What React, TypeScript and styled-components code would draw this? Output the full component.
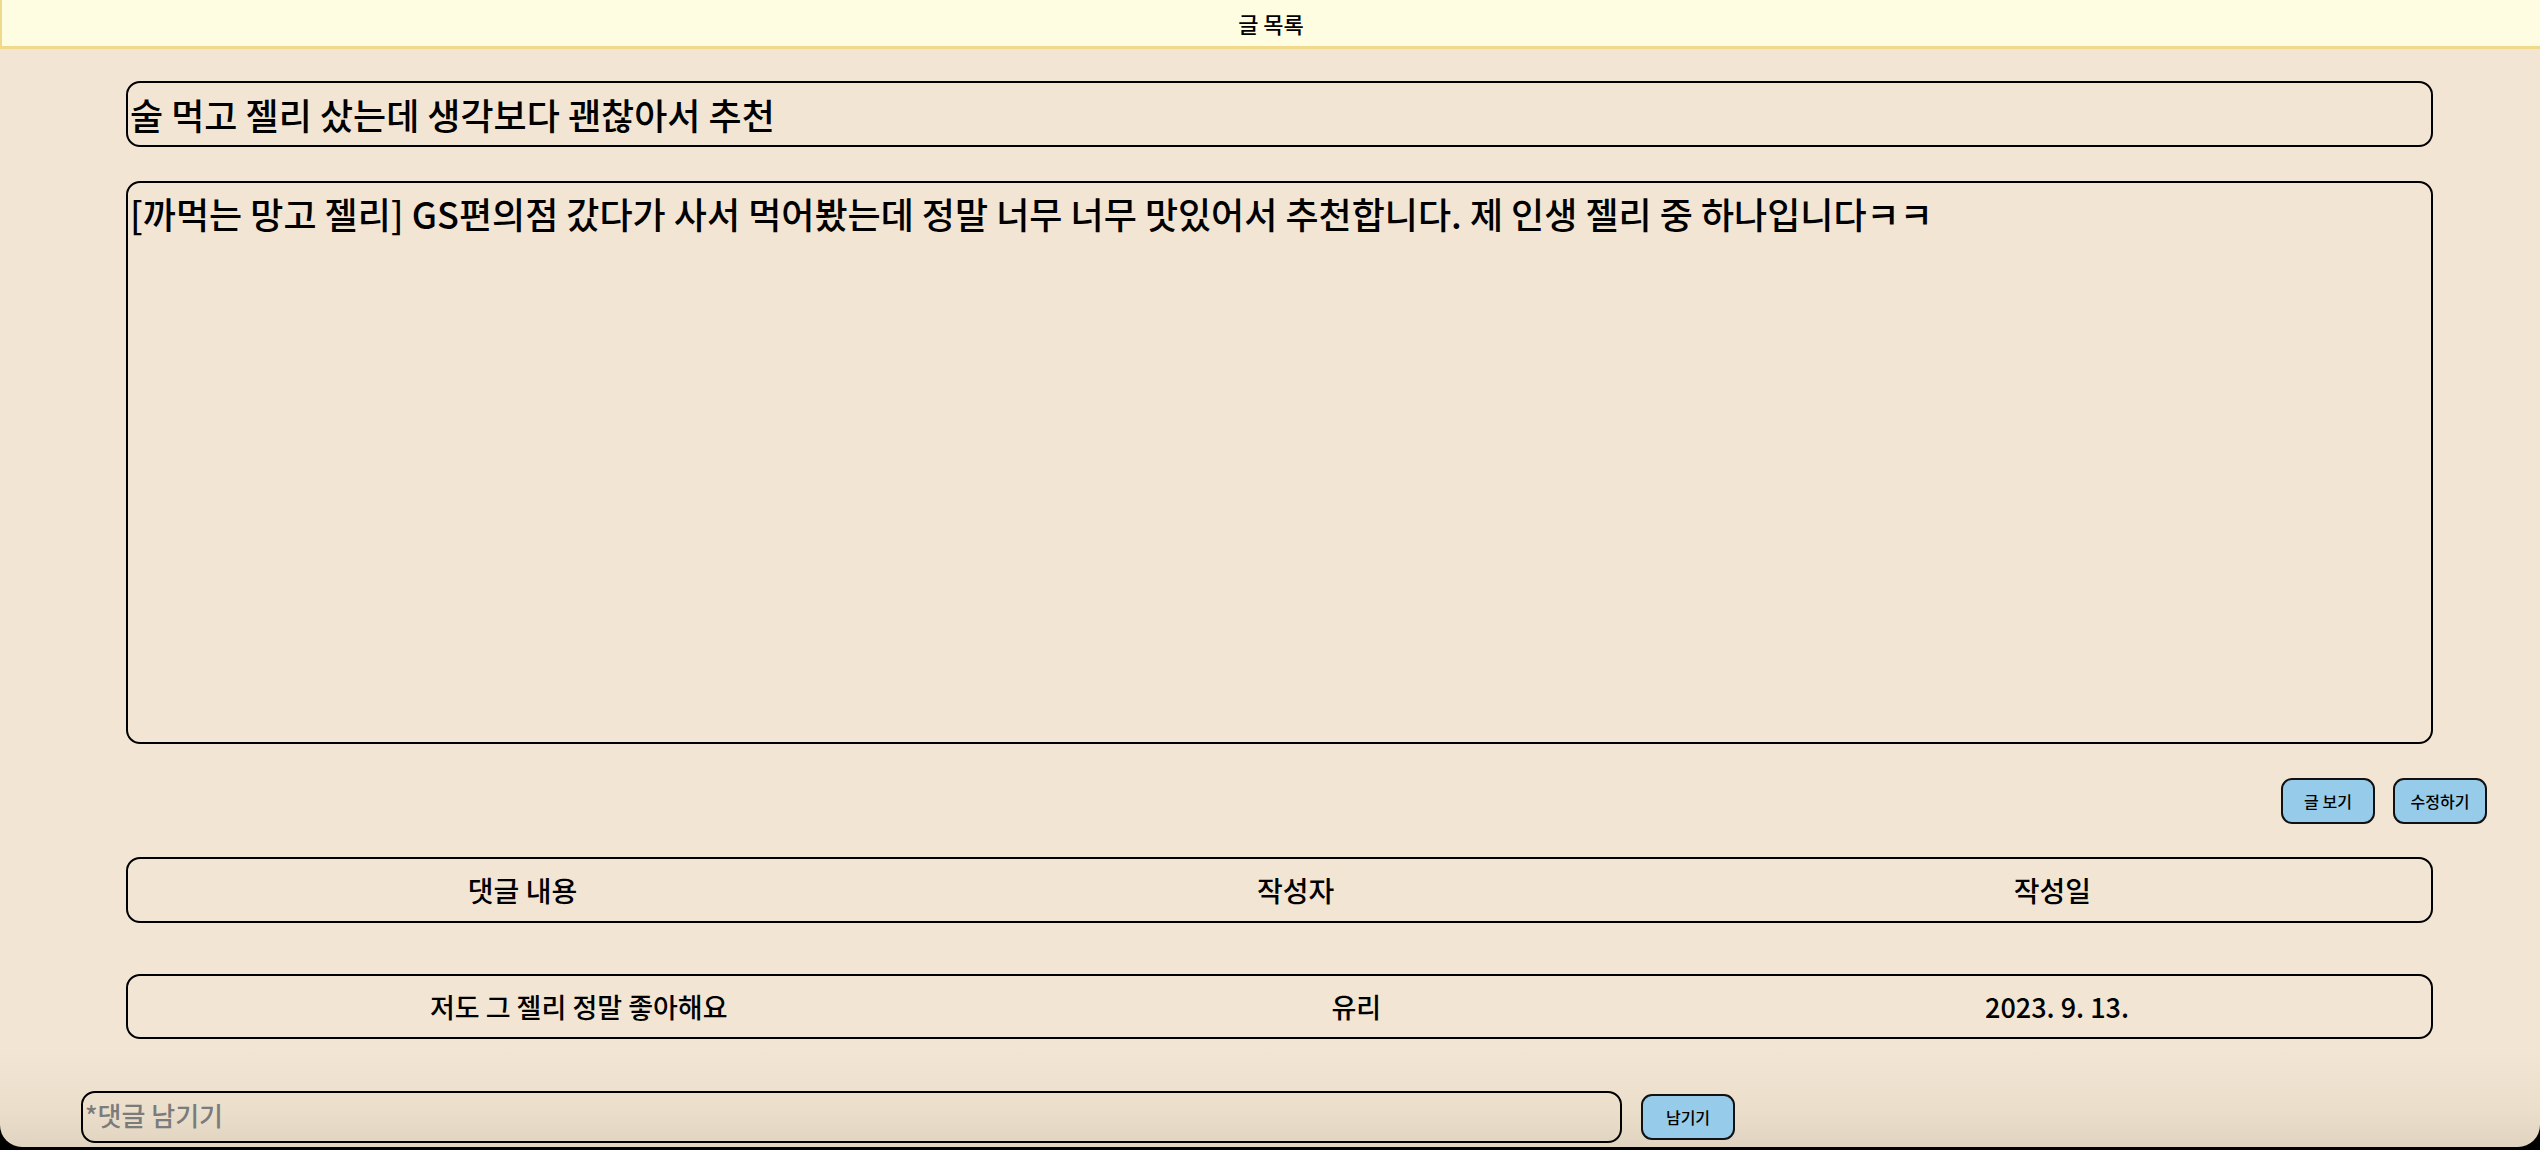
import React from "react";
import styled, { createGlobalStyle } from "styled-components";

const GlobalStyle = createGlobalStyle`
  html, body {
    margin: 0;
    padding: 0;
    background: #000;
  }
  body {
    font-family: "Noto Sans CJK KR", "Noto Sans", sans-serif;
    font-weight: 500;
    color: #000;
  }
  * { box-sizing: border-box; }
`;

const Window = styled.div`
  height: 1147px;
  overflow: hidden;
  border-radius: 0 0 22px 22px;
  background: linear-gradient(
    to bottom,
    #f2e5d3 0,
    #f2e5d3 1050px,
    #ebdfcc 1110px,
    #e0d4c1 1147px
  );
  display: flex;
  flex-direction: column;
`;

const Header = styled.header`
  height: 49px;
  background: #fffde1;
  border-left: 2px solid #f1d98c;
  border-bottom: 3px solid #f1d98c;
  display: flex;
  align-items: center;
  justify-content: center;
  font-size: 22px;
  line-height: 1;
`;

const Box = styled.div<{ $top: number; $height: number }>`
  margin: ${(p) => p.$top}px 107px 0 126px;
  height: ${(p) => p.$height}px;
  border: 2px solid #000;
  border-radius: 14px;
  flex-shrink: 0;
`;

const TitleBox = styled(Box)`
  display: flex;
  align-items: center;
  padding: 0 2px;
  font-size: 36px;
  line-height: 1;
`;

const ContentBox = styled(Box)`
  padding: 6px 2px;
  font-size: 36px;
  line-height: 1.35;
`;

const ButtonRow = styled.div`
  margin-top: 34px;
  padding-right: 53px;
  display: flex;
  justify-content: flex-end;
  gap: 18px;
`;

const Button = styled.button`
  width: 94px;
  height: 46px;
  border: 2px solid #111;
  border-radius: 11px;
  background: #96cbe9;
  font-family: "Noto Sans CJK KR", "Noto Sans", sans-serif;
  font-weight: 500;
  font-size: 16px;
  color: #000;
  padding: 0;
  cursor: pointer;
`;

const CommentRow = styled(Box)<{ $size: number }>`
  display: flex;
  align-items: center;
  justify-content: space-around;
  font-size: ${(p) => p.$size}px;
  line-height: 1;
`;

const CommentForm = styled.form`
  margin-top: 52px;
  padding-left: 81px;
  display: flex;
  align-items: center;
  gap: 19px;
`;

const CommentInput = styled.input`
  width: 1541px;
  height: 52px;
  border: 2px solid #000;
  border-radius: 14px;
  background: transparent;
  padding: 0 2px 6px;
  font-family: "Noto Sans CJK KR", "Noto Sans", sans-serif;
  font-weight: 500;
  font-size: 26px;
  color: #000;
  outline: none;
  &::placeholder {
    color: #7b7b7b;
  }
`;

export default function App() {
  return (
    <>
      <GlobalStyle />
      <Window>
        <Header>글 목록</Header>
        <TitleBox $top={32} $height={66}>
          술 먹고 젤리 샀는데 생각보다 괜찮아서 추천
        </TitleBox>
        <ContentBox $top={34} $height={563}>
          [까먹는 망고 젤리] GS편의점 갔다가 사서 먹어봤는데 정말 너무 너무 맛있어서 추천합니다. 제 인생 젤리 중 하나입니다ㅋㅋ
        </ContentBox>
        <ButtonRow>
          <Button type="button">글 보기</Button>
          <Button type="button">수정하기</Button>
        </ButtonRow>
        <CommentRow $top={33} $height={66} $size={28}>
          <span>댓글 내용</span>
          <span>작성자</span>
          <span>작성일</span>
        </CommentRow>
        <CommentRow $top={51} $height={65} $size={27}>
          <span>저도 그 젤리 정말 좋아해요</span>
          <span>유리</span>
          <span>2023. 9. 13.</span>
        </CommentRow>
        <CommentForm onSubmit={(e) => e.preventDefault()}>
          <CommentInput placeholder="*댓글 남기기" />
          <Button type="submit">남기기</Button>
        </CommentForm>
      </Window>
    </>
  );
}
